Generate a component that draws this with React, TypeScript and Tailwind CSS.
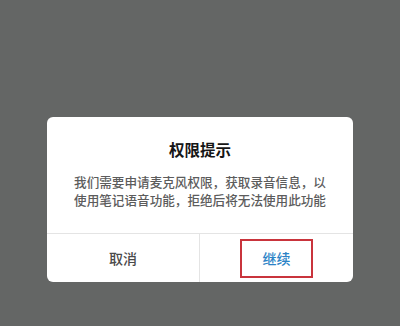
const FONT = {
  fontFamily: '"Noto Sans CJK SC", "Noto Sans", sans-serif',
};

export default function App() {
  return (
    <div className="h-[326px] w-[400px] bg-[#646665] px-[47px] pt-[117px]" style={FONT}>
      <div className="overflow-hidden rounded-[6px] bg-white">
        <div className="px-4 pt-[22px] pb-[24px] text-center">
          <h2 className="font-bold text-[#161616] text-[15.5px] leading-[20px]">权限提示</h2>
          <p className="mt-[14px] font-medium text-[#5c5c5c] text-[12.6px] leading-[18px]">
            我们需要申请麦克风权限，获取录音信息，以
            <br />
            使用笔记语音功能，拒绝后将无法使用此功能
          </p>
        </div>
        <div className="grid h-[49px] grid-cols-2 border-[#e4e4e4] border-t">
          <button className="flex items-center justify-center border-[#e4e4e4] border-r font-medium text-[#4a4a4a] text-[14px]">
            取消
          </button>
          <button className="flex items-center justify-center">
            <span className="flex h-[39px] w-[73px] items-center justify-center border-2 border-[#c9343c] font-medium text-[#2b82c6] text-[14px]">
              继续
            </span>
          </button>
        </div>
      </div>
    </div>
  );
}
